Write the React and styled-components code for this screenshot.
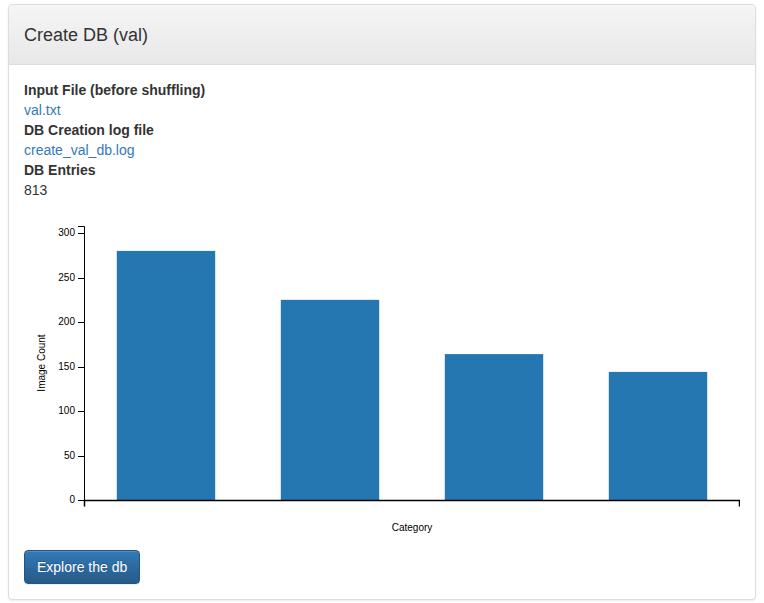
import React from "react";
import styled, { createGlobalStyle } from "styled-components";

const Global = createGlobalStyle`
  html, body { margin: 0; padding: 0; background: #fff; }
  body {
    padding: 4px 8px;
    font-family: "Liberation Sans", Arial, sans-serif;
    font-size: 14px;
    line-height: 20px;
    color: #333;
  }
`;

const Panel = styled.div`
  border: 1px solid #ddd;
  border-radius: 4px;
  box-shadow: 0 1px 2px rgba(0, 0, 0, 0.08);
  background: #fff;
  overflow: hidden;
`;

const Heading = styled.div`
  height: 60px;
  box-sizing: border-box;
  padding: 0 15px;
  display: flex;
  align-items: center;
  background: linear-gradient(to bottom, #f5f5f5 0%, #e8e8e8 100%);
  border-bottom: 1px solid #ddd;
`;

const Title = styled.h3`
  margin: 0;
  font-size: 18px;
  font-weight: 400;
  line-height: 24px;
  color: #333;
`;

const Body = styled.div`
  padding: 15px;
`;

const Dl = styled.dl`
  margin: 0;
`;

const Dt = styled.dt`
  font-weight: 700;
`;

const Dd = styled.dd`
  margin: 0;
`;

const Link = styled.a`
  color: #337ab7;
  text-decoration: none;
`;

const ChartSvg = styled.svg`
  display: block;
  font-family: "Liberation Sans", Arial, sans-serif;
  font-size: 10px;
`;

const Button = styled.button`
  display: inline-block;
  padding: 6px 12px;
  font-family: inherit;
  font-size: 14px;
  line-height: 20px;
  color: #fff;
  background: linear-gradient(to bottom, #337ab7 0%, #265a88 100%);
  border: 1px solid #245580;
  border-radius: 4px;
  text-shadow: 0 -1px 0 rgba(0, 0, 0, 0.2);
  box-shadow: inset 0 1px 0 rgba(255, 255, 255, 0.15), 0 1px 1px rgba(0, 0, 0, 0.075);
  cursor: pointer;
`;

const data = [280, 225, 164, 144];

function Chart() {
  const W = 716;
  const H = 350;
  const left = 60;
  const top = 26;
  const innerW = 656;
  const innerH = 274;
  const maxV = 308;
  const y = (v) => top + innerH - (v / maxV) * innerH;
  const band = innerW / data.length;
  const barW = band * 0.6;
  const ticks = [0, 50, 100, 150, 200, 250, 300];
  const baseY = top + innerH;
  return (
    <ChartSvg width={W} height={H} viewBox={`0 0 ${W} ${H}`}>
      {data.map((v, i) => (
        <rect
          key={i}
          x={left + band * i + band * 0.2}
          y={y(v)}
          width={barW}
          height={baseY - y(v)}
          fill="#2477b1"
        />
      ))}
      <path
        d={`M${left - 6},${top + 0.5}H${left + 0.5}V${baseY + 0.5}H${left - 6}`}
        fill="none"
        stroke="#000"
        strokeWidth="1"
      />
      {ticks.map((t) => (
        <g key={t}>
          <line x1={left - 6} x2={left} y1={Math.round(y(t)) + 0.5} y2={Math.round(y(t)) + 0.5} stroke="#000" />
          <text x={left - 9} y={y(t)} dy="0.32em" textAnchor="end" fill="#000">
            {t}
          </text>
        </g>
      ))}
      <path
        d={`M${left + 0.5},${baseY + 6.5}V${baseY + 0.5}H${left + innerW - 0.5}V${baseY + 6.5}`}
        fill="none"
        stroke="#000"
        strokeWidth="1.5"
      />
      <text
        transform={`translate(21, ${top + innerH / 2}) rotate(-90)`}
        textAnchor="middle"
        fill="#000"
      >
        Image Count
      </text>
      <text x={left + innerW / 2} y={331} textAnchor="middle" fill="#000">
        Category
      </text>
    </ChartSvg>
  );
}

export default function App() {
  return (
    <>
      <Global />
      <Panel>
        <Heading>
          <Title>Create DB (val)</Title>
        </Heading>
        <Body>
          <Dl>
            <Dt>Input File (before shuffling)</Dt>
            <Dd>
              <Link href="#">val.txt</Link>
            </Dd>
            <Dt>DB Creation log file</Dt>
            <Dd>
              <Link href="#">create_val_db.log</Link>
            </Dd>
            <Dt>DB Entries</Dt>
            <Dd>813</Dd>
          </Dl>
          <Chart />
          <Button>Explore the db</Button>
        </Body>
      </Panel>
    </>
  );
}
